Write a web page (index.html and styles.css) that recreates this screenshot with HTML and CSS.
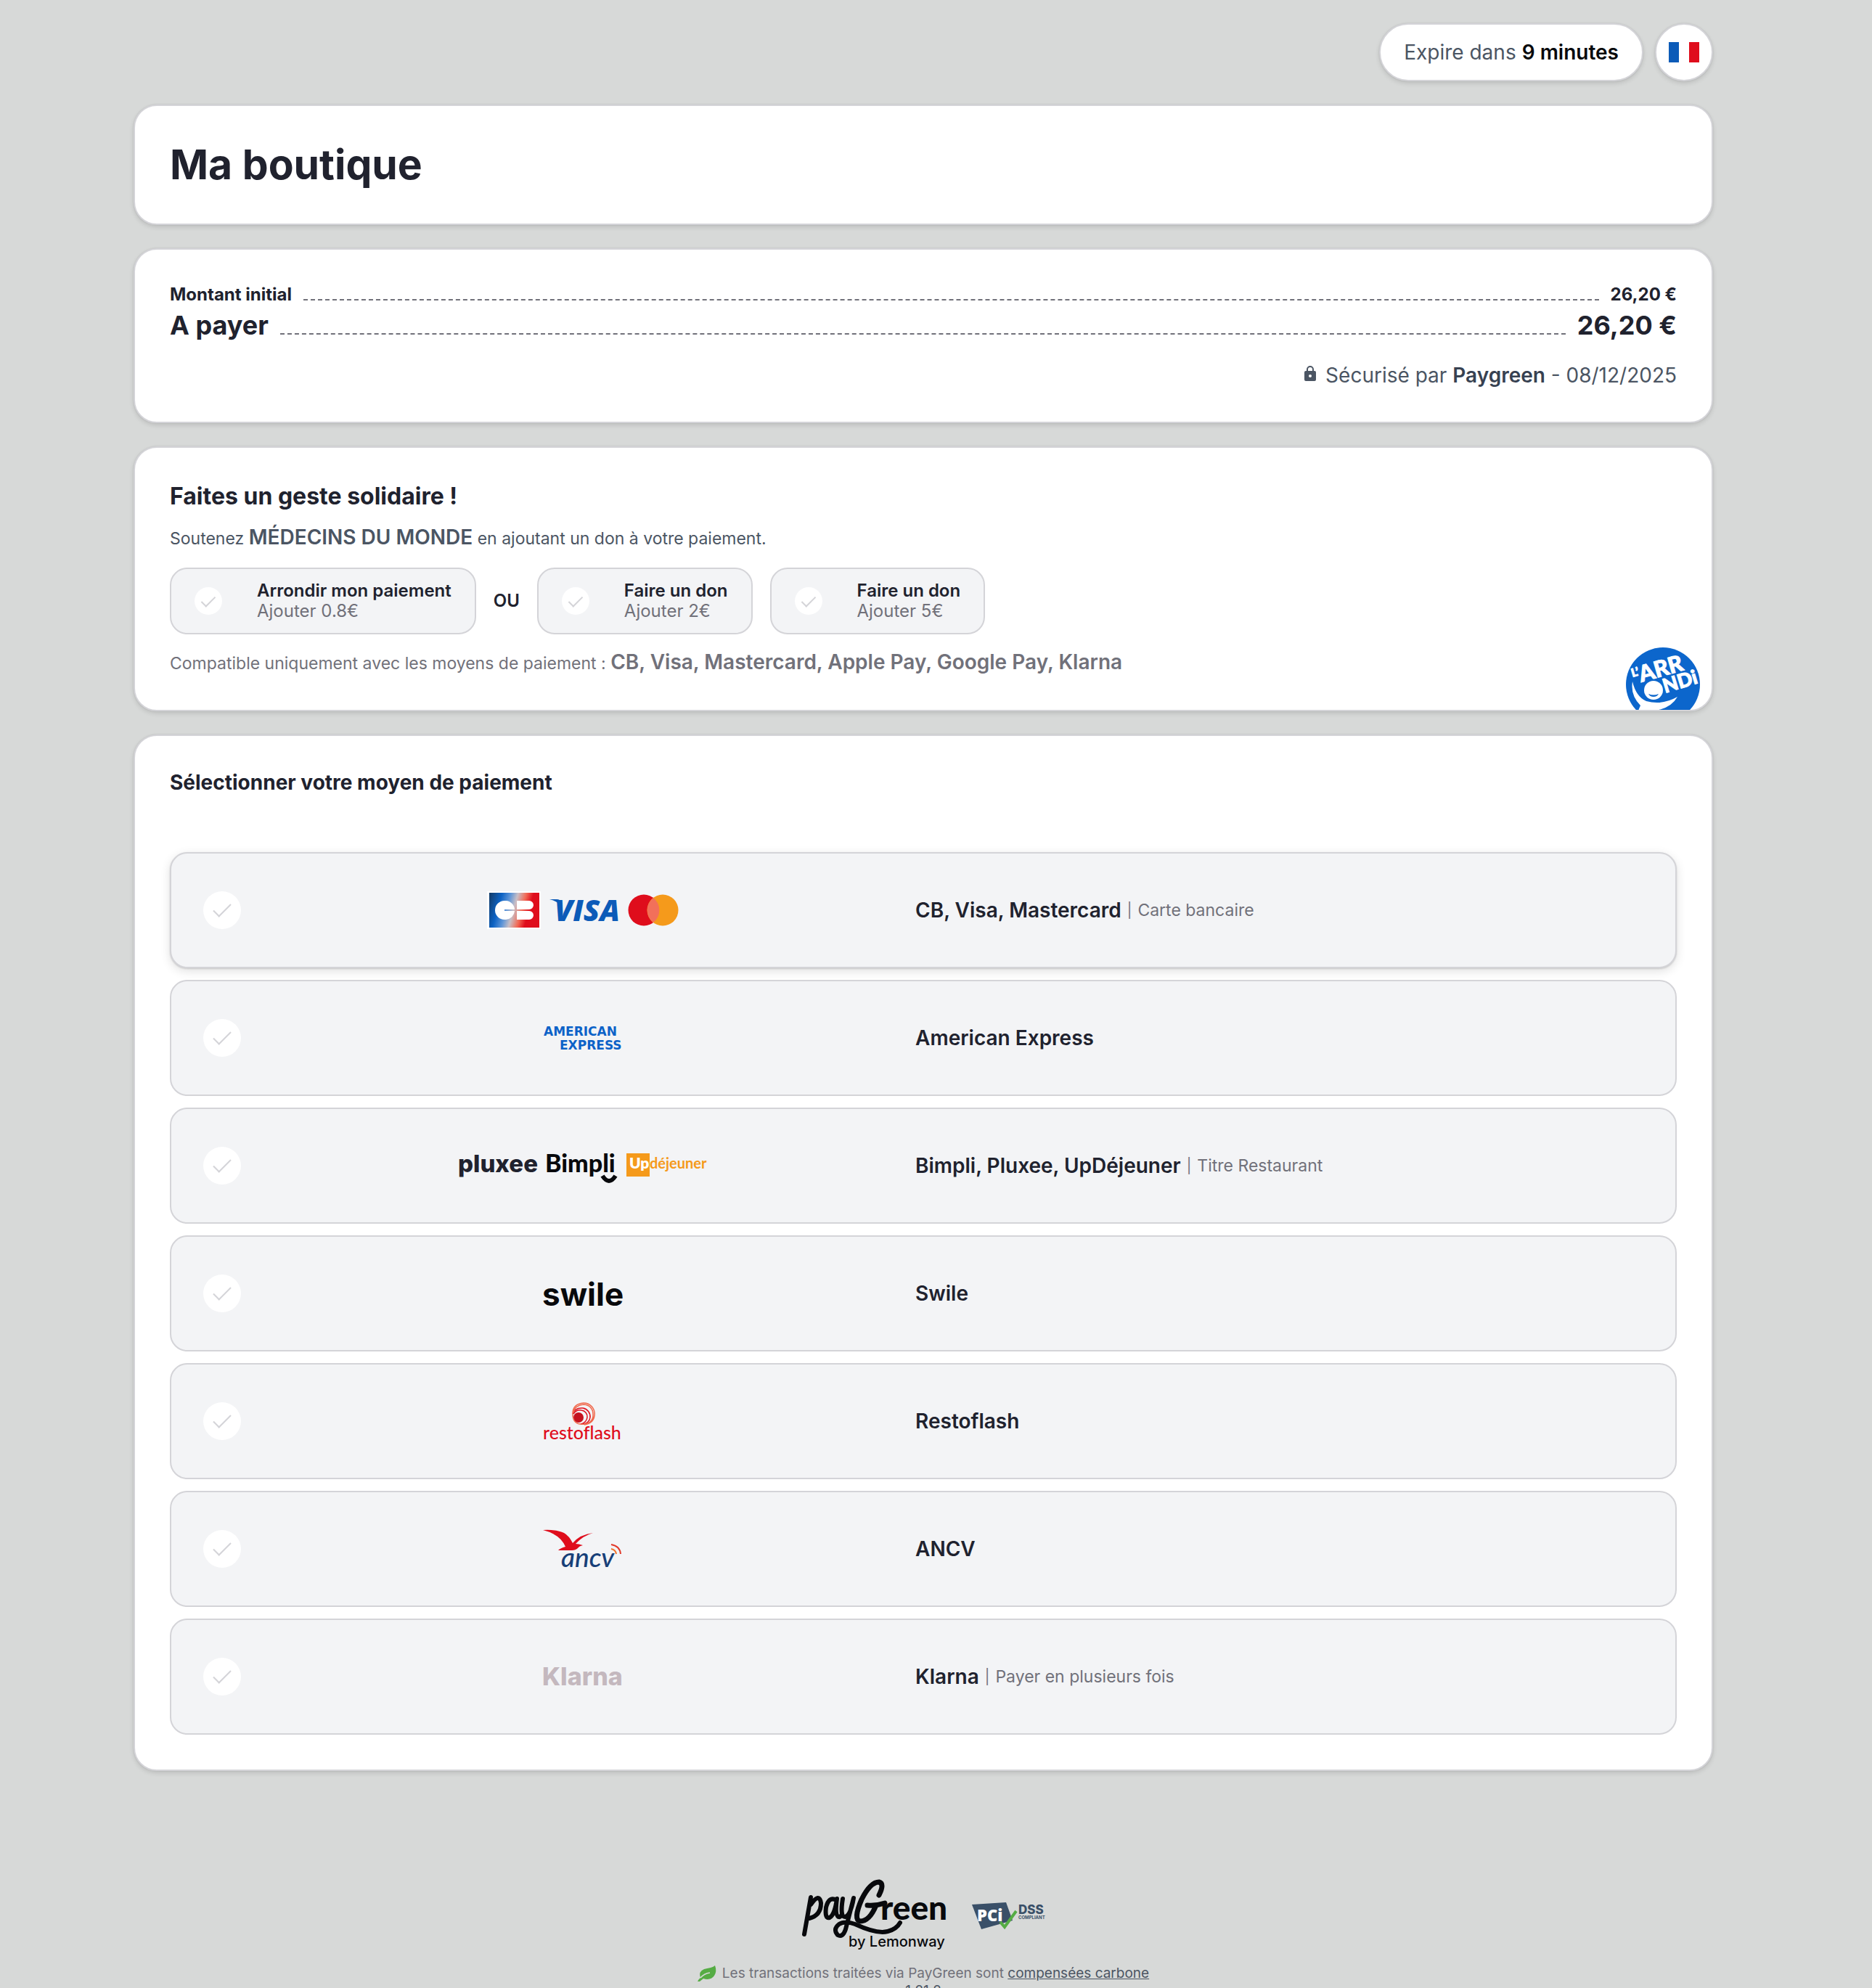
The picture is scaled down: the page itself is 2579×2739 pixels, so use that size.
FILE: index.html
```html
<!DOCTYPE html>
<html lang="fr">
<head>
    <meta charset="UTF-8">
    <meta name="viewport" content="width=device-width, initial-scale=1.0">
    <title>Ma boutique - Paiement</title>
    <link rel="stylesheet" href="styles.css">
</head>
<body>
    <div class="page">
        <header class="topbar">
            <div class="timer">Expire dans <strong>9 minutes</strong></div>
            <button type="button" class="lang" aria-label="Français">
                <svg width="42" height="28" viewBox="0 0 42 28">
                    <rect width="14" height="28" fill="#0c5bb8"/>
                    <rect x="14" width="14" height="28" fill="#fff"/>
                    <rect x="28" width="14" height="28" fill="#df0d1c"/>
                </svg>
            </button>
        </header>

        <section class="card">
            <h1>Ma boutique</h1>
        </section>

        <section class="card">
            <div class="amount">
                <span>Montant initial</span>
                <span class="dashes"></span>
                <span>26,20 €</span>
            </div>
            <div class="amount amount-total">
                <span>A payer</span>
                <span class="dashes"></span>
                <span>26,20 €</span>
            </div>
            <p class="secure">
                <svg class="lock" width="18" height="22" viewBox="0 0 18 22">
                    <path d="M5 9V6a4 4 0 0 1 8 0v3" fill="none" stroke="#4b5563" stroke-width="2"/>
                    <rect x="1" y="8" width="16" height="14" rx="2" fill="#4b5563"/>
                    <circle cx="9" cy="15" r="2" fill="#fff"/>
                </svg>
                <span>Sécurisé par <strong>Paygreen</strong> - 08/12/2025</span>
            </p>
        </section>

        <section class="card solidarity">
            <h2>Faites un geste solidaire !</h2>
            <p class="support">Soutenez <strong>MÉDECINS DU MONDE</strong> en ajoutant un don à votre paiement.</p>
            <div class="donations">
                <label class="donation">
                    <input type="radio" name="donation" class="check check-small">
                    <span class="donation-text"><strong>Arrondir mon paiement</strong><span>Ajouter 0.8€</span></span>
                </label>
                <span class="or">OU</span>
                <label class="donation">
                    <input type="radio" name="donation" class="check check-small">
                    <span class="donation-text"><strong>Faire un don</strong><span>Ajouter 2€</span></span>
                </label>
                <label class="donation">
                    <input type="radio" name="donation" class="check check-small">
                    <span class="donation-text"><strong>Faire un don</strong><span>Ajouter 5€</span></span>
                </label>
            </div>
            <p class="support compatible">Compatible uniquement avec les moyens de paiement : <strong>CB, Visa, Mastercard, Apple Pay, Google Pay, Klarna</strong></p>
            <svg class="arrondi" width="102" height="102" viewBox="0 0 102 102">
                <circle cx="51" cy="51" r="51" fill="#0c66cc"/>
                <g fill="#fff" stroke="#fff" font-family="Lato, sans-serif" font-weight="900">
                    <text transform="translate(9 41) rotate(-16)" font-size="16">L’</text>
                    <text transform="translate(21 48) rotate(-16)" font-size="31">ARR</text>
                    <text transform="translate(54 63) rotate(-17)" font-size="27">NDi</text>
                </g>
                <circle cx="38" cy="59" r="13" fill="#fff"/>
                <path d="M31 64q7 3 14 0q-2 4-7 4t-7-4z" fill="#0c66cc"/>
                <path d="M9 47Q14 68 28 74Q50 80 71 68Q62 84 40 87H17l3-7Q6 66 9 47z" fill="#fff"/>
            </svg>
        </section>

        <section class="card">
            <h3>Sélectionner votre moyen de paiement</h3>
            <div class="methods">
                <label class="method method-raised">
                    <input type="radio" name="method" class="check">
                    <span class="logos">
                        <svg width="74" height="52" viewBox="0 0 74 52">
                            <defs>
                                <linearGradient id="cb" x1="0" y1="0" x2="1" y2="0.2">
                                    <stop offset="0" stop-color="#123a66"/>
                                    <stop offset="0.25" stop-color="#0c62c4"/>
                                    <stop offset="0.42" stop-color="#5f96d8"/>
                                    <stop offset="0.56" stop-color="#c9bfc6"/>
                                    <stop offset="0.72" stop-color="#f26a55"/>
                                    <stop offset="0.86" stop-color="#df0d1c"/>
                                </linearGradient>
                            </defs>
                            <rect width="74" height="52" fill="#fff"/>
                            <rect x="3" y="2" width="69" height="48" fill="url(#cb)"/>
                            <path d="M24 13h2a13 13 0 0 1 12 12H24v2h14a13 13 0 0 1-12 12h-2a13 13 0 0 1 0-26z" fill="#fff"/>
                            <path d="M41 13h17a6 6 0 0 1 0 12H41zM41 27h17a6 6 0 0 1 0 12H41z" fill="#fff"/>
                        </svg>
                        <svg width="96" height="34" viewBox="0 0 96 34">
                            <path d="M0 2h10q5 0 6 4l1 6Q12 5 0 2z" fill="#0c5bb8"/>
                            <text x="7" y="32" font-family="Open Sans, sans-serif" font-size="41" font-weight="800" font-style="italic" fill="#0c5bb8">VISA</text>
                        </svg>
                        <svg width="70" height="44" viewBox="0 0 70 44">
                            <circle cx="22" cy="22" r="21.500" fill="#df0d1c"/>
                            <circle cx="48" cy="22" r="21.500" fill="#f59a1b"/>
                            <path d="M35 5a21.500 21.500 0 0 1 0 34a21.500 21.500 0 0 1 0-34z" fill="#f2705a"/>
                        </svg>
                    </span>
                    <span class="name"><strong>CB, Visa, Mastercard</strong><i>|</i><span>Carte bancaire</span></span>
                </label>

                <label class="method">
                    <input type="radio" name="method" class="check">
                    <span class="logos">
                        <svg width="108" height="34" viewBox="0 0 108 34">
                            <g font-family="DejaVu Sans, sans-serif" font-size="17" font-weight="700" fill="#0c62c8">
                                <text x="0" y="14">AMERICAN</text>
                                <text x="22" y="33">EXPRESS</text>
                            </g>
                        </svg>
                    </span>
                    <span class="name"><strong>American Express</strong></span>
                </label>

                <label class="method">
                    <input type="radio" name="method" class="check">
                    <span class="logos">
                        <svg width="108" height="44" viewBox="0 0 108 44">
                            <text x="-1" y="31" font-family="Inter, sans-serif" font-size="33" font-weight="800" fill="#20222e">pluxee</text>
                        </svg>
                        <svg width="98" height="44" viewBox="0 0 98 44">
                            <text x="-1" y="31" font-family="Lato, sans-serif" font-size="34" font-weight="900" fill="#08090c">Bimpli</text>
                            <path d="M78 36q9 14 18 0" fill="none" stroke="#08090c" stroke-width="6"/>
                        </svg>
                        <svg width="112" height="44" viewBox="0 0 112 44">
                            <rect x="1" y="5" width="32" height="32" fill="#f59a1b"/>
                            <text x="5" y="26" font-family="Lato, sans-serif" font-size="21" font-weight="800" fill="#fff">Up</text>
                            <text x="33" y="26" font-family="Lato, sans-serif" font-size="20" font-weight="700" fill="#f59a1b">déjeuner</text>
                        </svg>
                    </span>
                    <span class="name"><strong>Bimpli, Pluxee, UpDéjeuner</strong><i>|</i><span>Titre Restaurant</span></span>
                </label>

                <label class="method">
                    <input type="radio" name="method" class="check">
                    <span class="logos">
                        <svg width="108" height="40" viewBox="0 0 108 40">
                            <text x="-2" y="37" font-family="Inter, sans-serif" font-size="44" font-weight="700" fill="#08090c">swile</text>
                        </svg>
                    </span>
                    <span class="name"><strong>Swile</strong></span>
                </label>

                <label class="method">
                    <input type="radio" name="method" class="check">
                    <span class="logos">
                        <svg width="108" height="54" viewBox="0 0 108 54">
                            <circle cx="48" cy="22" r="7" fill="#c4121f"/>
                            <g fill="none" stroke="#df0d1c" stroke-width="1.500">
                                <path d="M41 17q4-6 11-5a9 9 0 0 1 8 10q-1 7-9 9"/>
                                <path d="M40 17q3-9 14-8a12 12 0 0 1 10 13q-1 8-11 9"/>
                            </g>
                            <path d="M41 15q2-10 14-11a13 13 0 0 1 13 13q1 12-12 14Q40 33 40 17q0-14 15-15a15 15 0 0 1 15 17q-1 11-14 13" fill="none" stroke="#f0684c" stroke-width="1.500"/>
                            <text class="no-liga" x="-1" y="52" font-family="Lato, sans-serif" font-size="25" font-weight="500" fill="#df0d1c">restoflash</text>
                        </svg>
                    </span>
                    <span class="name"><strong>Restoflash</strong></span>
                </label>

                <label class="method">
                    <input type="radio" name="method" class="check">
                    <span class="logos">
                        <svg width="110" height="56" viewBox="0 0 110 56">
                            <path d="M0 2q19-1 29 4q7 4 12 14q10-12 28-14q-14 4-24 15q4 0 10 2q-5 1-7 4q-3 3-8 3H21q3-3 10-5Q24 8 0 2z" fill="#df0d1c"/>
                            <text x="25" y="53" font-family="Lato, sans-serif" font-size="37" font-weight="500" font-style="italic" fill="#173f78">ancv</text>
                            <path d="M94 28q6 1 7 7" fill="none" stroke="#f0742c" stroke-width="2"/>
                            <path d="M94 22q12 2 13 13" fill="none" stroke="#e23a2a" stroke-width="2"/>
                        </svg>
                    </span>
                    <span class="name"><strong>ANCV</strong></span>
                </label>

                <label class="method">
                    <input type="radio" name="method" class="check">
                    <span class="logos">
                        <svg width="108" height="32" viewBox="0 0 108 32">
                            <text x="-2" y="28" font-family="Inter, sans-serif" font-size="34" font-weight="800" fill="#c4b8be">Klarna</text>
                        </svg>
                    </span>
                    <span class="name"><strong>Klarna</strong><i>|</i><span>Payer en plusieurs fois</span></span>
                </label>
            </div>
        </section>

        <footer class="footer">
            <div class="footer-logos">
                <svg width="202" height="100" viewBox="0 0 202 100">
                    <g fill="none" stroke="#08090c" stroke-width="6" stroke-linecap="round" stroke-linejoin="round">
                        <path d="M12 24L3 75M12 34q12-17 14-2q0 17-16 21"/>
                        <path d="M47 28q-10-6-14 10q-2 16 5 14q7-4 10-26q-3 22 2 25q3 1 5-4"/>
                        <path d="M56 26q-4 25 3 25q8-2 12-26L60 68q-4 12-11 8q-7-8 2-15q8-5 22 0q30 14 45 10q12-3 17-12"/>
                        <path d="M106 21q8-16 0-18q-12 0-24 24q-12 28-2 30q13 0 22-22M90 35q12 1 24-3" stroke-width="7"/>
                    </g>
                    <text x="108" y="55" font-family="Lato, sans-serif" font-size="46" font-weight="900" fill="#08090c">reen</text>
                    <text x="64" y="92" font-family="Inter, sans-serif" font-size="20" font-weight="500" fill="#08090c">by Lemonway</text>
                </svg>
                <svg width="100" height="40" viewBox="0 0 100 40">
                    <path d="M0 4L47 1L56 26L13 38z" fill="#3a5068"/>
                    <text x="7" y="27" font-family="Open Sans, sans-serif" font-size="22" font-weight="800" fill="#fff">PCi</text>
                    <path d="M39 28l6 7L61 13" fill="none" stroke="#55ac44" stroke-width="4"/>
                    <text x="64" y="17" font-family="Inter, sans-serif" font-size="17" font-weight="800" fill="#3a5068">DSS</text>
                    <text x="64" y="24" font-family="Inter, sans-serif" font-size="6" font-weight="700" fill="#3a5068">COMPLIANT</text>
                </svg>
            </div>
            <p class="carbon">
                <svg width="26" height="22" viewBox="0 0 26 22">
                    <path d="M24 0q3 8-1 14q-5 7-15 4l-5 4H0q1-3 4-5Q1 8 9 5q4-1 9-2q4-1 6-3z" fill="#55ac44"/>
                    <path d="M4 17q5-6 13-7" fill="none" stroke="#d7d9d8" stroke-width="1.500"/>
                </svg>
                <span>Les transactions traitées via PayGreen sont <a href="#">compensées carbone</a></span>
            </p>
            <p class="version">1.21.2</p>
        </footer>
    </div>
</body>
</html>
```
FILE: styles.css
```css
* { box-sizing: border-box; }
html { height: 100%; overflow: hidden; }
body { margin: 0; padding: 32px 35px 0 0; background: #d7d9d8; color: #20222e; font-family: Inter, "Liberation Sans", sans-serif; font-size: 28px; line-height: 32px; }
h1, h2, h3, p { margin: 0; }
strong { font-weight: 600; }
svg { overflow: visible; flex-shrink: 0; }

.page { max-width: 2176px; margin: 0 auto; display: flex; flex-direction: column; gap: 32px; }

.topbar { display: flex; justify-content: flex-end; gap: 16px; }
.timer, .lang, .card { background: #fff; border: 2px solid #d4d4d8; box-shadow: 0 0 2px rgba(0,0,0,0.12), 0 3px 6px rgba(0,0,0,0.12); }
.timer { height: 80px; padding: 0 32px; border-radius: 40px; display: flex; align-items: center; gap: 8px; color: #4b5563; }
.timer strong { color: #08090c; }
.lang { width: 80px; height: 80px; padding: 0; border-radius: 50%; display: flex; align-items: center; justify-content: center; cursor: pointer; }

.card { padding: 48px; border-radius: 32px; }
h1 { font-size: 57px; line-height: 66px; font-weight: 700; }
h2 { font-size: 32px; line-height: 37px; font-weight: 700; }
h3 { font-size: 28px; line-height: 32px; font-weight: 700; margin-bottom: 80px; }

/* amounts */
.amount { display: flex; align-items: baseline; gap: 16px; font-size: 24px; line-height: 28px; font-weight: 700; }
.amount-total { font-size: 36px; line-height: 56px; }
.dashes { flex: 1; border-bottom: 2px dashed #71717a; }
.secure { display: flex; justify-content: flex-end; gap: 12px; margin-top: 25px; color: #4b5563; }
.secure strong { color: #374151; }
.lock { margin-top: 2px; }

/* donation */
.solidarity { position: relative; overflow: hidden; display: flex; flex-direction: column; gap: 24px; }
.support { font-size: 23px; color: #4b5563; }
.support strong { font-size: 28px; line-height: 1; }
.compatible, .compatible strong { color: #71717a; }
.donations { display: flex; align-items: center; gap: 24px; font-size: 24px; }
.donation { display: flex; align-items: center; gap: 48px; height: 92px; padding: 0 32px; background: #f3f4f6; border: 2px solid #d4d4d8; border-radius: 24px; cursor: pointer; }
.donation-text { display: flex; flex-direction: column; line-height: 28px; color: #71717a; }
.donation-text strong { color: #20222e; }
.or { font-weight: 600; }
.arrondi { position: absolute; right: 16px; bottom: -16px; }

/* round check boxes */
.check { appearance: none; margin: 0; width: 52px; height: 52px; border-radius: 50%; background: #fff; display: grid; place-content: center; cursor: pointer; }
.check::before { content: ""; width: 10px; height: 22px; margin-bottom: 6px; border: solid #d4d4d8; border-width: 0 2px 2px 0; transform: rotate(45deg); }
.check-small { width: 38px; height: 38px; }
.check-small::before { width: 8px; height: 17px; margin-bottom: 4px; }

/* payment methods */
.methods { display: flex; flex-direction: column; gap: 16px; }
.method { display: grid; grid-template-columns: 65px 7fr 8fr; align-items: center; height: 160px; padding-left: 44px; background: #f3f4f6; border: 2px solid #d4d4d8; border-radius: 24px; cursor: pointer; }
.method-raised { box-shadow: 0 1px 2px rgba(0,0,0,0.15), 0 4px 14px rgba(0,0,0,0.12); }
.logos { display: flex; align-items: center; justify-content: center; gap: 12px; }
.name { display: flex; align-items: center; gap: 8px; color: #71717a; }
.name strong { color: #20222e; }
.name i { font-style: normal; font-size: 20px; }
.name span { font-size: 23px; }
.no-liga { font-variant-ligatures: none; }

/* footer */
.footer { padding-top: 118px; display: flex; flex-direction: column; align-items: center; font-size: 19px; line-height: 24px; color: #71717a; }
.footer-logos { display: flex; align-items: center; gap: 32px; }
.carbon { display: flex; align-items: center; gap: 8px; margin-top: 17px; }
.carbon a { color: #4b5563; }
.version { color: #4b5563; }
```
